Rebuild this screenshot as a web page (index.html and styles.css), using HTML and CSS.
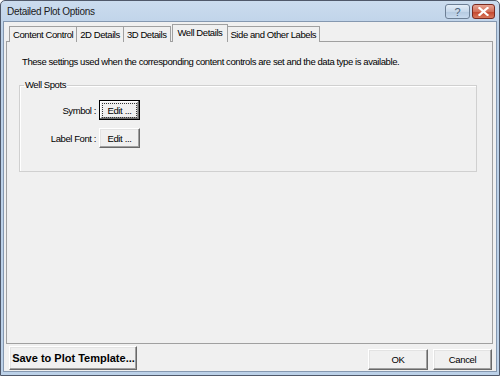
FILE: index.html
```html
<!DOCTYPE html>
<html>
<head>
<meta charset="utf-8">
<link rel="stylesheet" href="styles.css">
</head>
<body>
<div class="window">
  <div class="titlebar">
    <span class="title">Detailed Plot Options</span>
    <div class="caption-btns">
      <div class="cbtn help">?</div>
      <div class="cbtn close">
        <svg width="11" height="9" viewBox="0 0 11 9"><path d="M1.5 1 L9.5 8 M9.5 1 L1.5 8" stroke="#fff" stroke-width="2.2" stroke-linecap="square"/></svg>
      </div>
    </div>
  </div>
  <div class="client">
    <div class="tabs">
      <div class="tab">Content Control</div>
      <div class="tab">2D Details</div>
      <div class="tab">3D Details</div>
      <div class="tab active">Well Details</div>
      <div class="tab">Side and Other Labels</div>
    </div>
    <div class="panel">
      <p class="desc">These settings used when the corresponding content controls are set and the data type is available.</p>
      <fieldset class="group">
        <legend>Well Spots</legend>
        <div class="row">
          <span class="lbl">Symbol :</span>
          <button class="btn focused"><span class="focus-ring">Edit ...</span></button>
        </div>
        <div class="row">
          <span class="lbl">Label Font :</span>
          <button class="btn">Edit ...</button>
        </div>
      </fieldset>
    </div>
    <div class="footer">
      <button class="save">Save to Plot Template...</button>
      <div class="spacer"></div>
      <button class="dlg-btn ok">OK</button>
      <button class="dlg-btn cancel">Cancel</button>
    </div>
  </div>
</div>
</body>
</html>
```
FILE: styles.css
```css
html, body {
  margin: 0;
  padding: 0;
  background: #ffffff;
}
body {
  font-family: "Liberation Sans", Arial, sans-serif;
  font-size: 9.5px;
  letter-spacing: -0.42px;
  color: #000;
}
.window {
  width: 500px;
  height: 376px;
  box-sizing: border-box;
  border: 1px solid #50596a;
  border-radius: 5px 5px 0 0;
  background: linear-gradient(#cbdcee, #bcd1e8 30px, #bcd1e8);
  display: flex;
  flex-direction: column;
  overflow: hidden;
}
.titlebar {
  height: 20px;
  display: flex;
  align-items: center;
  padding: 0 4px 0 6px;
  flex: none;
}
.title {
  flex: 1;
  font-size: 10px;
  letter-spacing: -0.3px;
  color: #1a1a1a;
}
.caption-btns {
  display: flex;
  gap: 2px;
  align-items: center;
  margin-top: 1px;
}
.cbtn {
  height: 15px;
  box-sizing: border-box;
  border: 1px solid #6d7f95;
  border-radius: 3px;
  display: flex;
  align-items: center;
  justify-content: center;
}
.help {
  width: 25px;
  background: linear-gradient(#e4eef8, #c6d7ea 50%, #b4c9e0 51%, #c8daee);
  color: #4a5f78;
  font-size: 11px;
  letter-spacing: 0;
  line-height: 12px;
}
.close {
  width: 23px;
  border-color: #7a2a20;
  background: linear-gradient(#e8a493, #d2705a 50%, #c2442c 51%, #d9785c);
}
.client {
  flex: 1;
  margin: 0 2px 3px 2px;
  border: 1px solid #8598b0;
  background: #f0f0f0;
  display: flex;
  flex-direction: column;
}
.tabs {
  display: flex;
  align-items: flex-end;
  padding: 2px 0 0 5px;
  height: 18px;
  margin-bottom: -1px;
  position: relative;
  z-index: 1;
}
.tab {
  height: 15px;
  line-height: 15px;
  padding: 0 3px;
  border: 1px solid #a0a0a0;
  border-bottom: none;
  background: #f0f0f0;
  color: #000;
  white-space: nowrap;
}
.tab + .tab {
  margin-left: -1px;
}
.tab.active {
  height: 17px;
  line-height: 15px;
  margin-left: 1px;
  margin-right: -1px;
  padding: 0 5px;
  background: #f0f0f0;
  position: relative;
  z-index: 2;
}
.panel {
  margin: 0 3px 0 2px;
  height: 301px;
  border: 1px solid #a0a0a0;
  background: #f0f0f0;
  flex: none;
}
.desc {
  margin: 13px 0 0 15px;
  line-height: 14px;
  height: 14px;
  white-space: nowrap;
}
.group {
  margin: 9px 15px 0 12px;
  padding: 8px 0 20px 0;
  border: 1px solid #d0d0d0;
  box-shadow: inset 1px 1px 0 #fff;
  height: 94px;
  box-sizing: border-box;
}
.group legend {
  margin-left: 4px;
  padding: 0 1px;
  line-height: 14px;
}
.row {
  display: flex;
  align-items: center;
  height: 20px;
  margin-bottom: 8px;
}
.lbl {
  width: 76px;
  text-align: right;
  margin-right: 3px;
}
.btn {
  width: 41px;
  height: 20px;
  box-sizing: border-box;
  font-family: inherit;
  font-size: 9.5px;
  letter-spacing: -0.35px;
  padding: 0;
  background: #f0f0f0;
  border: 1px solid;
  border-color: #ffffff #696969 #696969 #ffffff;
  box-shadow: inset -1px -1px 0 #a0a0a0, inset 1px 1px 0 #e3e3e3;
  color: #000;
  display: flex;
  align-items: center;
  justify-content: center;
}
.btn.focused {
  border: 1px solid #000;
  box-shadow: inset -1px -1px 0 #696969, inset 1px 1px 0 #fff, inset -2px -2px 0 #a0a0a0;
}
.focus-ring {
  border: 1px dotted #333;
  padding: 1px 4px;
  line-height: 11px;
}
.footer {
  flex: 1;
  display: flex;
  align-items: flex-end;
  padding: 0 4px 1px 5px;
}
.spacer { flex: 1; }
.save {
  width: 128px;
  height: 24px;
  box-sizing: border-box;
  padding: 0 0 0 1px;
  font-family: "Liberation Sans", Arial, sans-serif;
  font-weight: bold;
  font-size: 11px;
  letter-spacing: 0;
  color: #000;
  white-space: nowrap;
  background: #f0f0f0;
  border: 1px solid;
  border-color: #ffffff #696969 #696969 #ffffff;
  box-shadow: inset -1px -1px 0 #a0a0a0, inset 1px 1px 0 #e3e3e3;
}
.dlg-btn {
  height: 21px;
  box-sizing: border-box;
  padding: 0;
  font-family: inherit;
  font-size: 9.5px;
  letter-spacing: -0.35px;
  color: #000;
  background: #f0f0f0;
  border: 1px solid;
  border-color: #ffffff #696969 #696969 #ffffff;
  box-shadow: inset -1px -1px 0 #a0a0a0, inset 1px 1px 0 #e3e3e3;
}
.ok { width: 60px; margin-right: 5px; }
.cancel { width: 59px; }
```
